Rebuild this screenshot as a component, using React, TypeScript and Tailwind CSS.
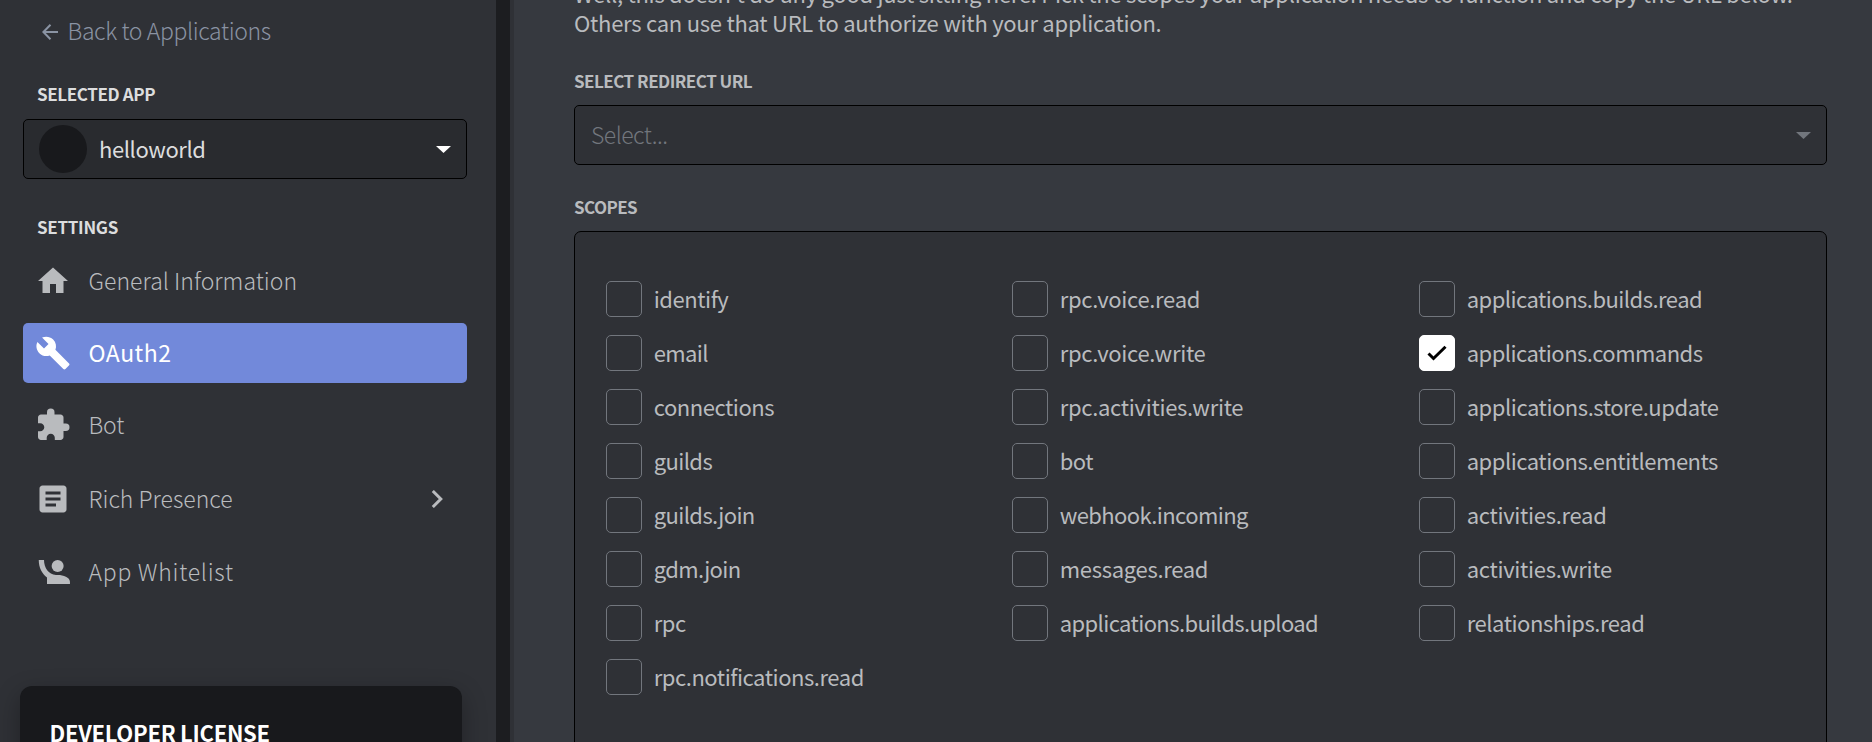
import React from "react";
import { MdHome, MdBuild, MdExtension, MdArticle } from "react-icons/md";

interface ScopeInfo {
  name: string;
  tracking: string;
  checked?: boolean;
}

const TIGHT = "tracking-[-0.6px]";
const NORMAL = "tracking-[-0.45px]";
const LOOSE = "tracking-[-0.3px]";

const columns: ScopeInfo[][] = [
  [
    { name: "identify", tracking: NORMAL },
    { name: "email", tracking: TIGHT },
    { name: "connections", tracking: NORMAL },
    { name: "guilds", tracking: TIGHT },
    { name: "guilds.join", tracking: TIGHT },
    { name: "gdm.join", tracking: TIGHT },
    { name: "rpc", tracking: NORMAL },
    { name: "rpc.notifications.read", tracking: NORMAL },
  ],
  [
    { name: "rpc.voice.read", tracking: LOOSE },
    { name: "rpc.voice.write", tracking: LOOSE },
    { name: "rpc.activities.write", tracking: LOOSE },
    { name: "bot", tracking: NORMAL },
    { name: "webhook.incoming", tracking: TIGHT },
    { name: "messages.read", tracking: LOOSE },
    { name: "applications.builds.upload", tracking: TIGHT },
  ],
  [
    { name: "applications.builds.read", tracking: "tracking-[-0.52px]" },
    { name: "applications.commands", tracking: "tracking-[-0.52px]", checked: true },
    { name: "applications.store.update", tracking: NORMAL },
    { name: "applications.entitlements", tracking: "tracking-[-0.48px]" },
    { name: "activities.read", tracking: LOOSE },
    { name: "activities.write", tracking: LOOSE },
    { name: "relationships.read", tracking: NORMAL },
  ],
];

function WhitelistIcon() {
  return (
    <svg viewBox="0 0 24 24" className="size-9" fill="currentColor">
      <circle cx="15.100" cy="8" r="4" />
      <path d="M8 20V15.600C4.700 13.200 2.500 9.200 2.500 4H6c0 5 3 9.700 8 10h1.300c3.500 0 8 1.500 8 4.500V20z" />
    </svg>
  );
}

function NavItem({
  icon,
  label,
  className,
  tracking,
}: {
  icon: React.ReactNode;
  label: string;
  className: string;
  tracking: string;
}) {
  return (
    <div className={`flex h-[60px] items-center rounded-[5px] pl-3 ${className}`}>
      {icon}
      <span className={`mb-0.5 ml-[17.500px] ${tracking}`}>{label}</span>
    </div>
  );
}

function Scope({ name, tracking, checked }: ScopeInfo) {
  return (
    <label className="flex h-9 items-center">
      <span
        className={`flex size-9 items-center justify-center rounded-[5px] border ${
          checked ? "border-white bg-white" : "border-[#72767d]"
        }`}
      >
        {checked && (
          <svg viewBox="0 0 36 36" className="size-9 shrink-0" fill="none" stroke="#000" strokeWidth="3">
            <path d="M9.500 18.500l5 5L26.500 11.700" />
          </svg>
        )}
      </span>
      <span className={`mb-px ml-[11.700px] ${tracking}`}>{name}</span>
    </label>
  );
}

export default function App() {
  return (
    <div className="flex h-[742px] w-[1872px] overflow-hidden bg-[#36393f] font-['Noto_Sans_CJK_SC',sans-serif] text-[22px] text-[#b9bbbe]">
      <aside className="w-[496px] shrink-0 bg-[#2f3136]">
        <div className="flex h-16 items-center pl-[42px] text-[#8a93a3]">
          <svg viewBox="0 0 16 16" className="h-4 w-4" fill="none" stroke="currentColor" strokeWidth="2">
            <path d="M16 8H1.500M8.500 .7L1.400 8l7.100 7.300" />
          </svg>
          <span className="mb-[3px] ml-[9.500px] text-[23px] font-light tracking-[-0.39px]">Back to Applications</span>
        </div>
        <h2 className="mt-[17px] ml-[37px] h-[27px] text-[17px] leading-[26px] font-bold tracking-[-0.4px] text-[#dcddde]">
          SELECTED APP
        </h2>
        <div className="mt-[11px] ml-[23px] flex h-[60px] w-[444px] items-center rounded-[5px] border border-black bg-[#292b2f] pl-[15px] text-[#dcddde]">
          <span className="size-12 rounded-full bg-[#18191c]" />
          <span className="mb-0.5 ml-3 text-[22px] font-normal tracking-[-0.4px]">helloworld</span>
          <svg viewBox="0 0 14 7" className="mr-[15px] ml-auto h-[7px] w-[15px] fill-white" preserveAspectRatio="none">
            <path d="M0 0h14L7 7z" />
          </svg>
        </div>
        <h2 className="mt-[35px] ml-[37px] h-[26px] text-[17px] leading-[26px] font-bold tracking-[-0.3px] text-[#dcddde]">
          SETTINGS
        </h2>
        <nav className="mt-[11px] ml-[23px] flex w-[444px] flex-col text-[23px] font-light">
          <NavItem icon={<MdHome className="size-9" />} label="General Information" className="" tracking="tracking-[0.03px]" />
          <NavItem
            icon={<MdBuild className="size-9" />}
            label="OAuth2"
            className="mt-3 bg-[#7289da] font-normal text-white"
            tracking="tracking-[0.5px]"
          />
          <NavItem icon={<MdExtension className="size-9" />} label="Bot" className="mt-3" tracking="tracking-[-0.2px]" />
          <div className="mt-3.5 flex items-center">
            <NavItem icon={<MdArticle className="size-9" />} label="Rich Presence" className="" tracking="tracking-[0px]" />
            <svg viewBox="0 0 12 18" className="mr-6 ml-auto h-[18px] w-3" fill="none" stroke="currentColor" strokeWidth="3">
              <path d="M1.800 1l8 8-8 8" />
            </svg>
          </div>
          <NavItem icon={<WhitelistIcon />} label="App Whitelist" className="mt-[13px]" tracking="tracking-[0.73px]" />
        </nav>
        <section className="mt-[84px] ml-5 h-[120px] w-[442px] rounded-xl bg-[#18191c] pt-[29px] pl-[29.500px] text-white shadow-[0_8px_24px_rgba(0,0,0,0.3)]">
          <h3 className="text-[22px] leading-[34px] font-bold tracking-[-0.28px]">DEVELOPER LICENSE</h3>
        </section>
      </aside>
      <div className="w-3.5 shrink-0 bg-[#1c1d20]" />
      <div className="w-1 shrink-0 bg-[#2f3136]" />
      <main className="ml-[60px] w-[1253px]">
        <p className="-mt-[21px] h-[69px] text-[22px] leading-[29px] tracking-[-0.26px] whitespace-nowrap">
          Well, this doesn't do any good just sitting here. Pick the scopes your application needs to function and copy the URL below.
          <br />
          Others can use that URL to authorize with your application.
        </p>
        <h2 className="mt-5 h-[26px] text-[17px] leading-[26px] font-bold tracking-[-0.52px]">SELECT REDIRECT URL</h2>
        <div className="mt-[11px] flex h-[60px] items-center rounded-[5px] border border-black bg-[#2f3136] pl-4 text-[#72767d]">
          <span className="mb-px text-[23px] font-light tracking-[-0.53px]">Select...</span>
          <svg viewBox="0 0 14 7" className="mr-[15px] ml-auto h-[7px] w-[15px] fill-[#72767d]" preserveAspectRatio="none">
            <path d="M0 0h14L7 7z" />
          </svg>
        </div>
        <h2 className="mt-[29px] h-[26px] text-[17px] leading-[26px] font-bold tracking-[-0.6px]">SCOPES</h2>
        <section className="mt-[11px] grid h-[540px] grid-cols-[406px_407px_1fr] rounded-[7px] border border-black bg-[#2f3136] pt-[49px] pl-[31px]">
          {columns.map((col, i) => (
            <div key={i} className="flex flex-col gap-[18px]">
              {col.map((s) => (
                <Scope key={s.name} {...s} />
              ))}
            </div>
          ))}
        </section>
      </main>
    </div>
  );
}
